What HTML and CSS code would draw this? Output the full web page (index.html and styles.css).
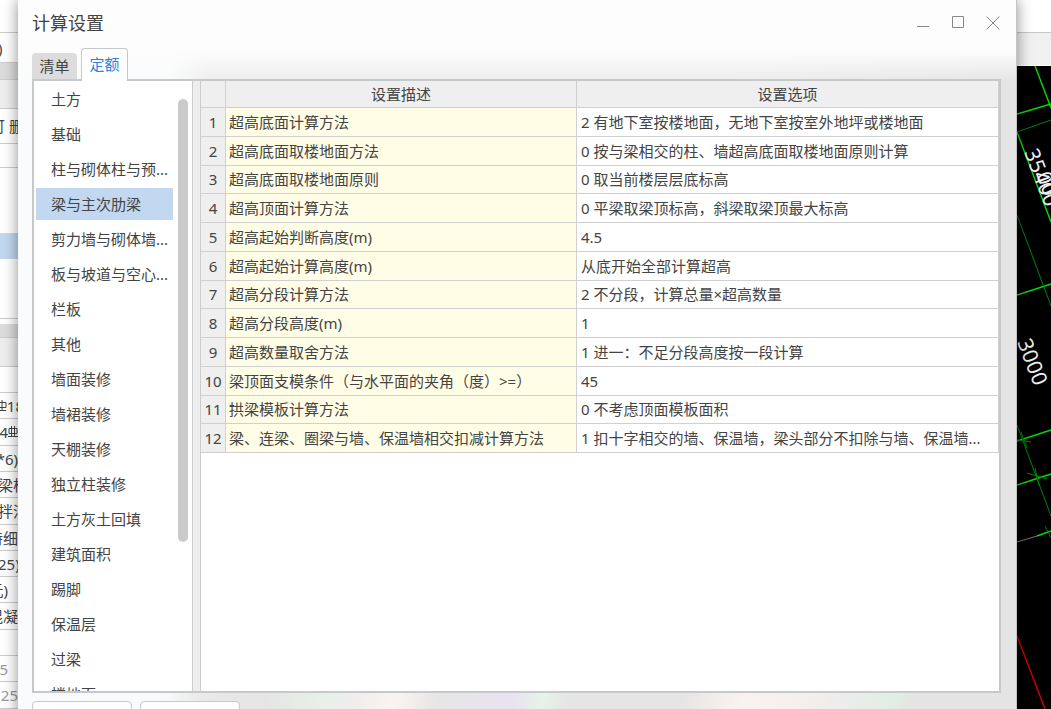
FILE: index.html
```
<!DOCTYPE html>
<html lang="zh-CN">
<head>
<meta charset="utf-8">
<title>计算设置</title>
<link rel="stylesheet" href="styles.css">
</head>
<body>
<div class="workspace">
  <div class="sheet">
    <div class="cell h33"></div>
    <div class="cell h30 tuck">)</div>
    <div class="cell h17 dark"></div>
    <div class="cell h29 grey"></div>
    <div class="cell h35 right over">可 删</div>
    <div class="cell h24"></div>
    <div class="cell h65 open"></div>
    <div class="cell h26 blue"></div>
    <div class="cell h60"></div>
    <div class="cell h5 open"></div>
    <div class="cell h14 dark"></div>
    <div class="cell h29 grey"></div>
    <div class="cell h26"></div>
    <div class="cell h26 right over"><svg class="bar" viewBox="0 0 10 12"><path d="M1 2.500H9V7.500H1ZM5 0V11M1 10.500H9"/></svg>18</div>
    <div class="cell h27 right">4<svg class="bar" viewBox="0 0 10 12"><path d="M1 2.500H9V7.500H1ZM3.500 0V11M6.500 0V11M0 10.500H10"/></svg></div>
    <div class="cell h26 right">*6)</div>
    <div class="cell h26 tuck">梁柱</div>
    <div class="cell h27 tuck">拌混</div>
    <div class="cell h26 right">特细</div>
    <div class="cell h26 tuck">25)</div>
    <div class="cell h26 back">元)</div>
    <div class="cell h27 right">混凝</div>
    <div class="cell h26"></div>
    <div class="cell h26 faint back">25</div>
    <div class="cell h27 faint right">125</div>
  </div>

  <main class="dialog">
    <header class="titlebar">
      <h1 class="title">计算设置</h1>
      <div class="controls">
        <button class="control" aria-label="最小化"><svg viewBox="0 0 14 14"><path d="M1 10.500H13"/></svg></button>
        <button class="control" aria-label="最大化"><svg viewBox="0 0 14 14"><path d="M1.500 .5H12.500V11.500H1.500Z"/></svg></button>
        <button class="control" aria-label="关闭"><svg viewBox="0 0 14 14"><path d="M.5 .5L13.500 13.500M13.500 .5L.5 13.500"/></svg></button>
      </div>
    </header>
    <nav class="tabs">
      <button class="tab">清单</button>
      <button class="tab active">定额</button>
    </nav>
    <section class="frame">
      <div class="sidebar">
        <ul class="menu">
          <li class="item">土方</li>
          <li class="item">基础</li>
          <li class="item">柱与砌体柱与预...</li>
          <li class="item selected">梁与主次肋梁</li>
          <li class="item">剪力墙与砌体墙...</li>
          <li class="item">板与坡道与空心...</li>
          <li class="item">栏板</li>
          <li class="item">其他</li>
          <li class="item">墙面装修</li>
          <li class="item">墙裙装修</li>
          <li class="item">天棚装修</li>
          <li class="item">独立柱装修</li>
          <li class="item">土方灰土回填</li>
          <li class="item">建筑面积</li>
          <li class="item">踢脚</li>
          <li class="item">保温层</li>
          <li class="item">过梁</li>
          <li class="item">楼地面</li>
        </ul>
        <div class="track"><div class="thumb"></div></div>
      </div>
      <div class="splitter"></div>
      <div class="content">
        <table class="grid">
          <colgroup><col class="col-no"><col class="col-name"><col></colgroup>
          <thead><tr><th></th><th>设置描述</th><th>设置选项</th></tr></thead>
          <tbody>
            <tr><th>1</th><td>超高底面计算方法</td><td>2 有地下室按楼地面，无地下室按室外地坪或楼地面</td></tr>
            <tr><th>2</th><td>超高底面取楼地面方法</td><td>0 按与梁相交的柱、墙超高底面取楼地面原则计算</td></tr>
            <tr><th>3</th><td>超高底面取楼地面原则</td><td>0 取当前楼层层底标高</td></tr>
            <tr><th>4</th><td>超高顶面计算方法</td><td>0 平梁取梁顶标高，斜梁取梁顶最大标高</td></tr>
            <tr><th>5</th><td>超高起始判断高度(m)</td><td>4.5</td></tr>
            <tr><th>6</th><td>超高起始计算高度(m)</td><td>从底开始全部计算超高</td></tr>
            <tr><th>7</th><td>超高分段计算方法</td><td>2 不分段，计算总量×超高数量</td></tr>
            <tr><th>8</th><td>超高分段高度(m)</td><td>1</td></tr>
            <tr><th>9</th><td>超高数量取舍方法</td><td>1 进一：不足分段高度按一段计算</td></tr>
            <tr><th>10</th><td>梁顶面支模条件（与水平面的夹角（度）&gt;=）</td><td>45</td></tr>
            <tr><th>11</th><td>拱梁模板计算方法</td><td>0 不考虑顶面模板面积</td></tr>
            <tr><th>12</th><td>梁、连梁、圈梁与墙、保温墙相交扣减计算方法</td><td>1 扣十字相交的墙、保温墙，梁头部分不扣除与墙、保温墙...</td></tr>
          </tbody>
        </table>
      </div>
    </section>
    <footer class="actions">
      <button class="action" aria-label="导入"></button>
      <button class="action" aria-label="导出"></button>
    </footer>
  </main>

  <div class="drawing">
    <div class="ribbon"></div>
    <svg class="cad" viewBox="0 0 34 643" preserveAspectRatio="xMinYMin slice">
      <g class="bright">
        <path d="M18 0L34 42M0 48L34 38M0 66L34 156M0 229L34 218M0 375L34 364M0 419L34 408M20 470L34 465"/>
      </g>
      <g class="dim">
        <path d="M0 66L34 54M0 149L34 240M0 359L34 450M0 374L14 376M4 366L10 382M10 407L30 413M18 402L22 419M28 460L34 472"/>
      </g>
      <path class="greyline" d="M0 476L20 470"/>
      <path class="red" d="M0 570L28 643"/>
      <text class="dim-text" transform="translate(7 86) rotate(69)">35400</text>
      <text class="dim-text" transform="translate(19 109) rotate(69)">00</text>
      <text class="dim-text" transform="translate(0 276) rotate(69)">3000</text>
    </svg>
  </div>
</div>
</body>
</html>
```
FILE: styles.css
```
* { box-sizing: border-box; }

body {
  margin: 0;
  height: 100vh;
  overflow: hidden;
  background: #fff;
  color: #444;
  font: 15px/20px "Noto Sans", "Noto Sans CJK SC", sans-serif;
}

button { margin: 0; padding: 0; border: 0; background: none; color: inherit; font: inherit; }

.workspace {
  display: grid;
  grid-template-columns: 18px minmax(0, 1fr) 34px;
  grid-template-rows: 100%;
  height: 100%;
}

/* Spreadsheet visible behind the dialog */
.sheet { overflow: hidden; background: #fff; }
.cell {
  display: flex;
  align-items: center;
  overflow: hidden;
  white-space: nowrap;
  border-bottom: 1px solid #ccc;
}
.right { justify-content: flex-end; }
.back { justify-content: flex-end; padding-right: 10px; }
.over { margin-right: -6px; }
.tuck { margin-left: -2px; }
.open { border-bottom: 0; }
.dark { background: #dcdcdc; }
.grey { background: #eee; }
.blue { background: #c2d8f0; border-bottom: 0; }
.faint { color: #999; }
.h5 { height: 5px; }
.h14 { height: 14px; }
.h17 { height: 17px; }
.h24 { height: 24px; }
.h26 { height: 26px; }
.h27 { height: 27px; }
.h29 { height: 29px; }
.h30 { height: 30px; }
.h33 { height: 33px; }
.h35 { height: 35px; }
.h60 { height: 60px; }
.h65 { height: 65px; }
.bar { flex: none; width: 10px; height: 12px; fill: none; stroke: #444; }

/* Dialog */
.dialog {
  position: relative;
  display: flex;
  flex-direction: column;
  height: calc(100vh + 16px);
  padding: 0 15px 0 14px;
  border-right: 1px solid #c4c4c4;
  background:
    linear-gradient(180deg, #fdfdfd 0, #fdfdfd 50px, rgba(253, 253, 253, 0) 82px),
    linear-gradient(90deg, #fafbfc 0, #fafbfc 150px, #ededed 190px, #ededed 700px, #e4e4e4 100%);
  box-shadow: 0 0 14px rgba(0, 0, 0, .45);
}
.titlebar {
  display: flex;
  align-items: center;
  justify-content: space-between;
  height: 48px;
  padding-bottom: 2px;
}
.title { margin: 0; font-size: 18px; line-height: 24px; font-weight: 400; }
.controls { display: flex; gap: 21px; padding-right: 1px; }
.control { width: 14px; height: 14px; }
.control svg { display: block; width: 14px; height: 14px; fill: none; stroke: #888; }

.tabs { display: flex; align-items: flex-end; gap: 4px; height: 31px; }
.tab {
  width: 45px;
  height: 26px;
  border-radius: 4px 4px 0 0;
  background: #dcdcdc;
}
.tab.active {
  position: relative;
  width: 47px;
  height: 33px;
  margin-bottom: -2px;
  padding-bottom: 2px;
  border: 1px solid #c3c8cc;
  border-bottom: 0;
  background: #fff;
  color: #2b80e0;
}

.frame {
  display: flex;
  flex: 1;
  min-height: 0;
  border: 2px solid #c5c9cc;
  background: #fff;
}
.sidebar {
  display: flex;
  flex: none;
  width: 159px;
  padding-left: 2px;
  border-right: 1px solid #ccc;
}
.menu {
  display: flex;
  flex-direction: column;
  gap: 3px;
  width: 137px;
  margin: 0;
  padding: 2px 0 0;
  overflow: hidden;
  list-style: none;
}
.item { flex: none; padding: 6px 0 6px 15px; white-space: nowrap; }
.selected { background: #c2d8f0; }
.track { padding: 18px 0 0 5px; }
.thumb { width: 10px; height: 443px; border-radius: 5px; background: #cacaca; }
.splitter { flex: none; width: 8px; border-right: 1px solid #ccc; background: #eee; }

.content { flex: 1; min-width: 0; }
.grid {
  width: 100%;
  height: 372px;
  table-layout: fixed;
  border-spacing: 0;
}
.col-no { width: 25px; }
.col-name { width: 351px; }
.grid th, .grid td {
  padding: 0 4px;
  border-right: 1px solid #d0d0d0;
  border-bottom: 1px solid #d0d0d0;
  overflow: hidden;
  white-space: nowrap;
  text-align: left;
}
.grid th {
  padding: 0;
  background: #efefef;
  font-weight: 400;
  text-align: center;
}
.grid thead th { height: 27px; }
.grid td:nth-child(2) { padding-left: 3px; background: #fffde6; }

.actions {
  display: flex;
  flex: none;
  gap: 8px;
  padding-top: 8px;
  margin-right: -15px;
  background: linear-gradient(100deg, transparent 0, transparent 120px, #e5e5e5 230px, #e6f1e7 290px, #ededed 310px, #fbf3f0 360px, #e6e6e6 400px, #e9e3f0 475px, #e6f3e8 505px, #e5e5e5 530px, #e5e5e5 640px, #fbf2ef 700px, #f5efec 760px, #ececec 800px, #e0efe3 850px, #e4e4e4 870px);
}
.action {
  width: 100px;
  height: 24px;
  border: 1px solid #c8c8c8;
  border-radius: 4px;
  background: #fff;
}

/* CAD canvas behind the dialog */
.drawing { display: flex; flex-direction: column; min-height: 0; background: #000; }
.ribbon {
  flex: none;
  height: 66px;
  border-bottom: 1px solid #fff;
  background: linear-gradient(#fff 0, #fff 32px, #c8c8c8 32px, #c8c8c8 33px, #f0f0f0 33px);
}
.cad { flex: 1; min-height: 0; width: 100%; background: #000; }
.cad path { fill: none; }
.bright path { stroke: #0d0; stroke-width: 1.4; }
.dim path { stroke: #008400; }
.cad .greyline { stroke: #777; }
.cad .red { stroke: #d00000; stroke-width: 1.4; }
.dim-text { fill: #eee; font-size: 21px; }
```
